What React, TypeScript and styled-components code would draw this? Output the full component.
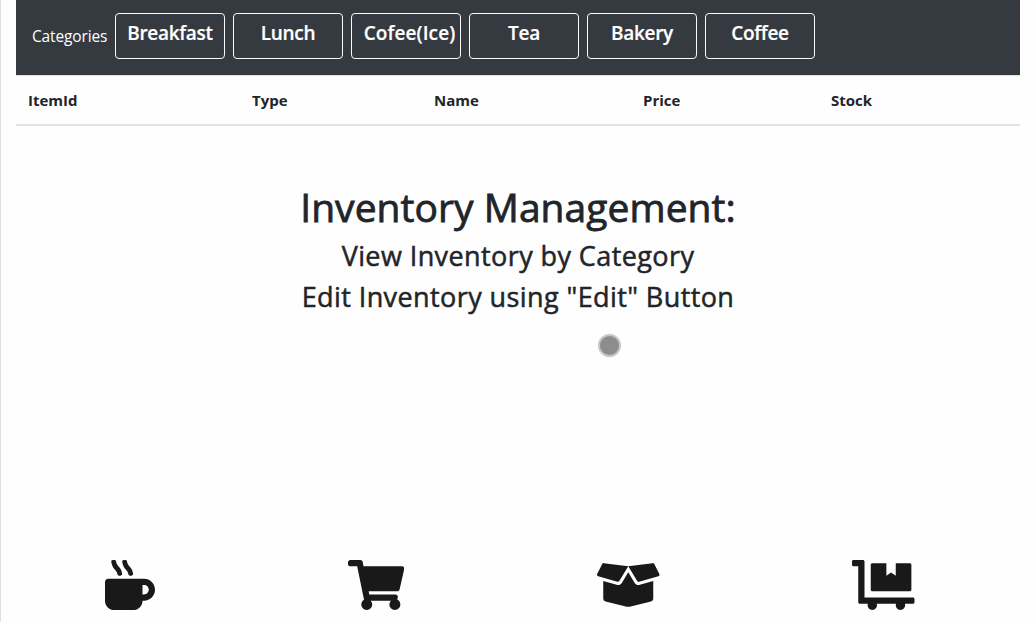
import React from "react";
import styled, { createGlobalStyle } from "styled-components";
import { FaMugHot, FaShoppingCart, FaBoxOpen, FaDollyFlatbed } from "react-icons/fa";

const GlobalStyle = createGlobalStyle`
  *, *::before, *::after { box-sizing: border-box; }
  html, body { margin: 0; height: 100%; overflow: hidden; }
  body {
    background: #fefefe;
    color: #212529;
    font-family: "Segoe UI", "Open Sans", "Noto Sans", sans-serif;
    font-size: 16px;
    line-height: 1.5;
  }
`;

const Page = styled.main`
  position: relative;
  height: 622px;
  padding: 0 15px;
  border-left: 1px solid #dfdfdf;
  display: flex;
  flex-direction: column;
`;

const Navbar = styled.nav`
  flex: none;
  height: 75px;
  padding: 13px 16px 16px;
  background: #343a40;
  display: flex;
  gap: 8px;
`;

const NavLabel = styled.span`
  width: 75px;
  padding-top: 12px;
  color: #fff;
  font-size: 15.5px;
  letter-spacing: -0.15px;
  white-space: nowrap;
`;

const CategoryButton = styled.button<{ $tracking?: number }>`
  width: 110px;
  height: 46px;
  padding: 0 0 7px;
  border: 1px solid #f8f9fa;
  border-radius: 4px;
  background: transparent;
  color: #fff;
  font-family: inherit;
  font-size: 19px;
  font-weight: 600;
  line-height: 24px;
  letter-spacing: ${(p) => p.$tracking ?? -0.3}px;
  text-indent: ${(p) => (p.$tracking ? 7 : 0)}px;
  -webkit-text-stroke: 0.2px currentColor;
  white-space: nowrap;
`;

const TableHead = styled.div`
  flex: none;
  height: 51px;
  border-top: 1px solid #dee2e6;
  border-bottom: 2px solid #dee2e6;
  display: grid;
  grid-template-columns: 224px 182px 209px 188px 1fr;
`;

const HeadCell = styled.div`
  padding: 12px;
  font-size: 15px;
  font-weight: 700;
  line-height: 24px;
  letter-spacing: 0;
`;

const Intro = styled.section`
  flex: 1;
  padding-top: 57px;
  text-align: center;
  white-space: nowrap;
`;

const Title = styled.h1`
  margin: 0 0 8px;
  font-size: 39px;
  font-weight: 500;
  line-height: 48px;
  letter-spacing: 0.05px;
  -webkit-text-stroke: 0.8px currentColor;
`;

const Subtitle = styled.h3`
  margin: 0 0 8px;
  font-size: 27px;
  font-weight: 500;
  line-height: 33px;
  letter-spacing: 0.41px;
  -webkit-text-stroke: 0.5px currentColor;
`;

const IconRow = styled.footer`
  flex: none;
  height: 62px;
  padding-left: 89px;
  display: flex;
  gap: 192.9px;
  color: #191919;
`;

const IconSlot = styled.span<{ $width: number }>`
  width: ${(p) => p.$width}px;
  height: 50px;
  svg { display: block; width: 100%; height: 100%; }
`;

const Pointer = styled.span`
  position: absolute;
  left: 597px;
  top: 334px;
  width: 23px;
  height: 23px;
  border: 2px solid #c6c6c6;
  border-radius: 50%;
  background: #8c8e8d;
`;

const categories: { name: string; tracking?: number }[] = [
  { name: "Breakfast" },
  { name: "Lunch" },
  { name: "Cofee(Ice)", tracking: 0.1 },
  { name: "Tea" },
  { name: "Bakery" },
  { name: "Coffee" },
];
const columns = ["ItemId", "Type", "Name", "Price", "Stock"];

export default function App() {
  return (
    <>
      <GlobalStyle />
      <Page>
        <Navbar>
          <NavLabel>Categories</NavLabel>
          {categories.map((c) => (
            <CategoryButton key={c.name} $tracking={c.tracking}>{c.name}</CategoryButton>
          ))}
        </Navbar>
        <TableHead>
          {columns.map((c) => (
            <HeadCell key={c}>{c}</HeadCell>
          ))}
        </TableHead>
        <Intro>
          <Title>Inventory Management:</Title>
          <Subtitle>View Inventory by Category</Subtitle>
          <Subtitle>Edit Inventory using "Edit" Button</Subtitle>
        </Intro>
        <IconRow>
          <IconSlot $width={50}><FaMugHot /></IconSlot>
          <IconSlot $width={56.25}><FaShoppingCart /></IconSlot>
          <IconSlot $width={62.5}><FaBoxOpen /></IconSlot>
          <IconSlot $width={62.5}><FaDollyFlatbed /></IconSlot>
        </IconRow>
        <Pointer />
      </Page>
    </>
  );
}
